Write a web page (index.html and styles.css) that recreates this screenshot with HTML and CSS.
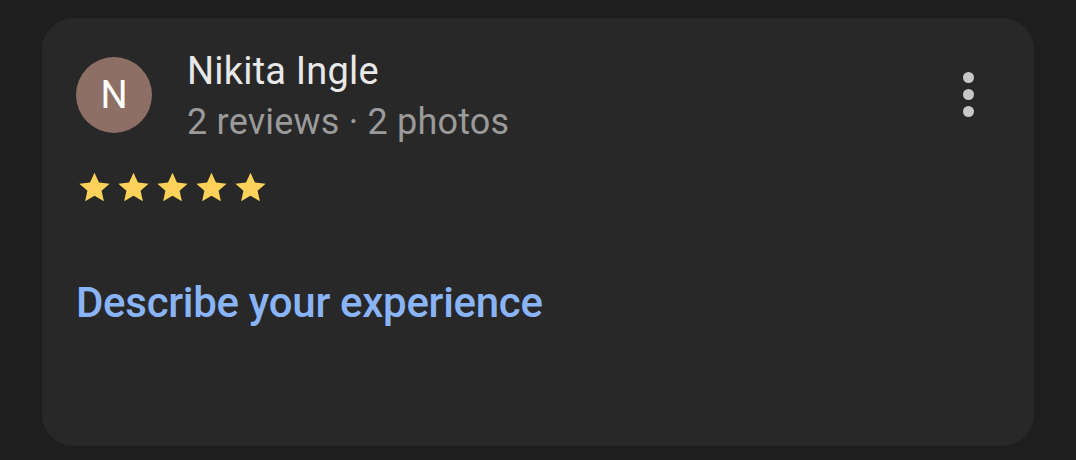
FILE: index.html
```html
<!DOCTYPE html>
<html>
<head>
<meta charset="utf-8">
<link rel="stylesheet" href="styles.css">
</head>
<body>
<div class="card">
  <div class="header">
    <div class="avatar">N</div>
    <div class="who">
      <div class="name">Nikita Ingle</div>
      <div class="meta">2 reviews · 2 photos</div>
    </div>
    <div class="more">
      <span></span><span></span><span></span>
    </div>
  </div>
  <div class="stars">
    <svg viewBox="0 0 24 24"><path d="M12 2.5l2.9 6.3 6.9.7-5.2 4.6 1.5 6.8L12 17.4l-6.1 3.5 1.5-6.8-5.2-4.6 6.9-.7z"/></svg>
    <svg viewBox="0 0 24 24"><path d="M12 2.5l2.9 6.3 6.9.7-5.2 4.6 1.5 6.8L12 17.4l-6.1 3.5 1.5-6.8-5.2-4.6 6.9-.7z"/></svg>
    <svg viewBox="0 0 24 24"><path d="M12 2.5l2.9 6.3 6.9.7-5.2 4.6 1.5 6.8L12 17.4l-6.1 3.5 1.5-6.8-5.2-4.6 6.9-.7z"/></svg>
    <svg viewBox="0 0 24 24"><path d="M12 2.5l2.9 6.3 6.9.7-5.2 4.6 1.5 6.8L12 17.4l-6.1 3.5 1.5-6.8-5.2-4.6 6.9-.7z"/></svg>
    <svg viewBox="0 0 24 24"><path d="M12 2.5l2.9 6.3 6.9.7-5.2 4.6 1.5 6.8L12 17.4l-6.1 3.5 1.5-6.8-5.2-4.6 6.9-.7z"/></svg>
  </div>
  <div class="describe">Describe your experience</div>
</div>
</body>
</html>
```

FILE: styles.css
```css
html, body {
  margin: 0;
  padding: 0;
  background: #1e1e1e;
  width: 1076px;
  height: 460px;
  overflow: hidden;
}
body {
  font-family: Roboto, "Liberation Sans", Arial, sans-serif;
  padding: 18px 42px 14px 42px;
  box-sizing: border-box;
}
.card {
  background: #282828;
  border-radius: 32px;
  height: 428px;
  padding: 38px 34px 0 34px;
  box-sizing: border-box;
}
.header {
  display: flex;
  align-items: flex-start;
}
.avatar {
  width: 76px;
  height: 76px;
  border-radius: 50%;
  background: #8d6f66;
  color: #fff;
  font-size: 38px;
  display: flex;
  align-items: center;
  justify-content: center;
  margin-top: 1px;
  flex: none;
}
.who {
  margin-left: 35px;
  flex: 1;
}
.name {
  color: #e8e8e8;
  font-size: 38px;
  line-height: 44px;
  margin-top: -7px;
  letter-spacing: 0.2px;
}
.meta {
  color: #9a9a9a;
  font-size: 36px;
  line-height: 42px;
  margin-top: 8px;
  letter-spacing: 0.2px;
}
.more {
  display: flex;
  flex-direction: column;
  gap: 6px;
  margin-top: 16px;
  margin-right: 26px;
}
.more span {
  display: block;
  width: 11px;
  height: 11px;
  border-radius: 50%;
  background: #c8c8c8;
}
.stars {
  display: flex;
  gap: 2px;
  margin-top: 26px;
}
.stars svg {
  width: 37px;
  height: 37px;
  fill: #fcd25a;
}
.describe {
  margin-top: 72px;
  color: #8ab4f8;
  font-size: 42px;
  font-weight: 500;
  letter-spacing: -0.3px;
}
```
